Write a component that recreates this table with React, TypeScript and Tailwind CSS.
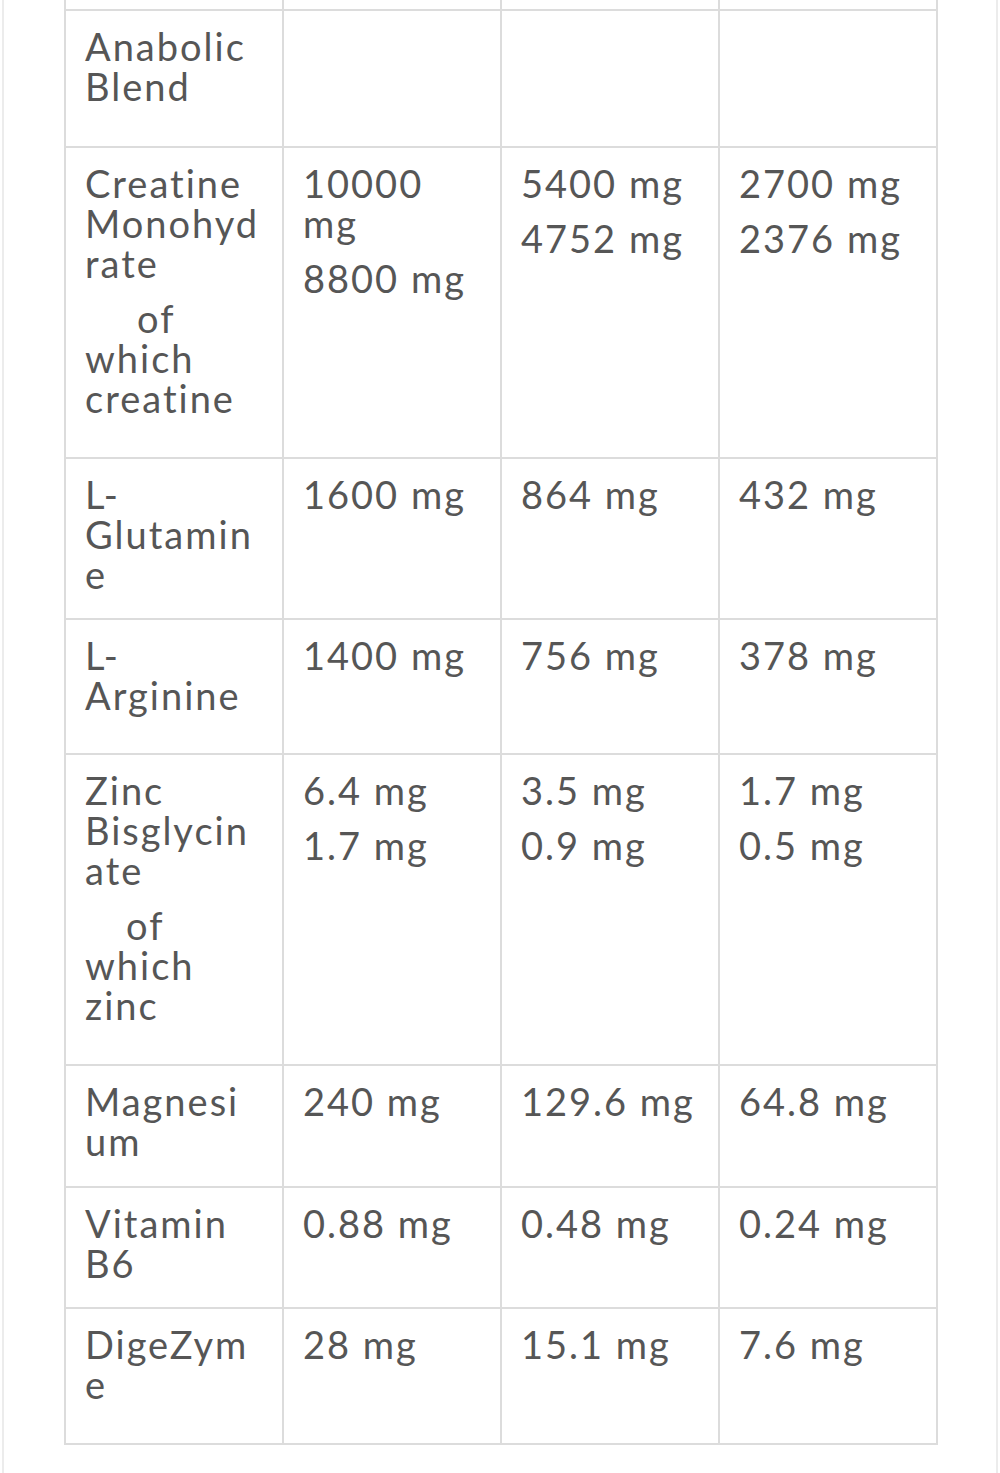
import React from "react";

type Para = { lines: string[]; indent?: number };
type Cell = Para[];
type Row = { h: string; cells: Cell[] };

const rows: Row[] = [
  { h: "h-[137px]", cells: [[{ lines: ["Anabolic", "Blend"] }], [], [], []] },
  {
    h: "h-[311px]",
    cells: [
      [
        { lines: ["Creatine", "Monohyd", "rate"] },
        { lines: ["of", "which", "creatine"], indent: 52 },
      ],
      [{ lines: ["10000", "mg"] }, { lines: ["8800 mg"] }],
      [{ lines: ["5400 mg"] }, { lines: ["4752 mg"] }],
      [{ lines: ["2700 mg"] }, { lines: ["2376 mg"] }],
    ],
  },
  {
    h: "h-[161px]",
    cells: [
      [{ lines: ["L-", "Glutamin", "e"] }],
      [{ lines: ["1600 mg"] }],
      [{ lines: ["864 mg"] }],
      [{ lines: ["432 mg"] }],
    ],
  },
  {
    h: "h-[135px]",
    cells: [
      [{ lines: ["L-", "Arginine"] }],
      [{ lines: ["1400 mg"] }],
      [{ lines: ["756 mg"] }],
      [{ lines: ["378 mg"] }],
    ],
  },
  {
    h: "h-[311px]",
    cells: [
      [
        { lines: ["Zinc", "Bisglycin", "ate"] },
        { lines: ["of", "which", "zinc"], indent: 41 },
      ],
      [{ lines: ["6.4 mg"] }, { lines: ["1.7 mg"] }],
      [{ lines: ["3.5 mg"] }, { lines: ["0.9 mg"] }],
      [{ lines: ["1.7 mg"] }, { lines: ["0.5 mg"] }],
    ],
  },
  {
    h: "h-[122px]",
    cells: [
      [{ lines: ["Magnesi", "um"] }],
      [{ lines: ["240 mg"] }],
      [{ lines: ["129.6 mg"] }],
      [{ lines: ["64.8 mg"] }],
    ],
  },
  {
    h: "h-[121px]",
    cells: [
      [{ lines: ["Vitamin", "B6"] }],
      [{ lines: ["0.88 mg"] }],
      [{ lines: ["0.48 mg"] }],
      [{ lines: ["0.24 mg"] }],
    ],
  },
  {
    h: "h-[136px]",
    cells: [
      [{ lines: ["DigeZym", "e"] }],
      [{ lines: ["28 mg"] }],
      [{ lines: ["15.1 mg"] }],
      [{ lines: ["7.6 mg"] }],
    ],
  },
];

function CellView({ paras }: { paras: Cell }) {
  return (
    <div className="border-l-2 border-t-2 border-[#dcdcdc] pl-[19px] pt-[15px] flex flex-col gap-[15px]">
      {paras.map((p, i) => (
        <div key={i} className="flex flex-col">
          {p.lines.map((l, j) => (
            <span
              key={j}
              className={
                "block whitespace-nowrap " +
                (j === 0 && p.indent === 52
                  ? "pl-[52px]"
                  : j === 0 && p.indent === 41
                  ? "pl-[41px]"
                  : "")
              }
            >
              {l}
            </span>
          ))}
        </div>
      ))}
    </div>
  );
}

export default function App() {
  return (
    <div className="w-[1000px] h-[1473px] bg-white overflow-hidden">
      <div
        className="mx-[2px] h-full border-x-2 border-[#ececec] text-[#565656] text-[38px] leading-[40px] tracking-[2px]"
        style={{ fontFamily: "Lato, 'Noto Sans', sans-serif" }}
      >
        <div className="ml-[60px] w-[874px] border-r-2 border-b-2 border-[#dcdcdc]">
          <div className="grid grid-cols-[218px_218px_218px_218px] h-[9px]">
            <div className="border-l-2 border-[#dcdcdc]" />
            <div className="border-l-2 border-[#dcdcdc]" />
            <div className="border-l-2 border-[#dcdcdc]" />
            <div className="border-l-2 border-[#dcdcdc]" />
          </div>
          {rows.map((r, i) => (
            <div key={i} className={"grid grid-cols-[218px_218px_218px_218px] " + r.h}>
              {r.cells.map((c, k) => (
                <CellView key={k} paras={c} />
              ))}
            </div>
          ))}
        </div>
      </div>
    </div>
  );
}
